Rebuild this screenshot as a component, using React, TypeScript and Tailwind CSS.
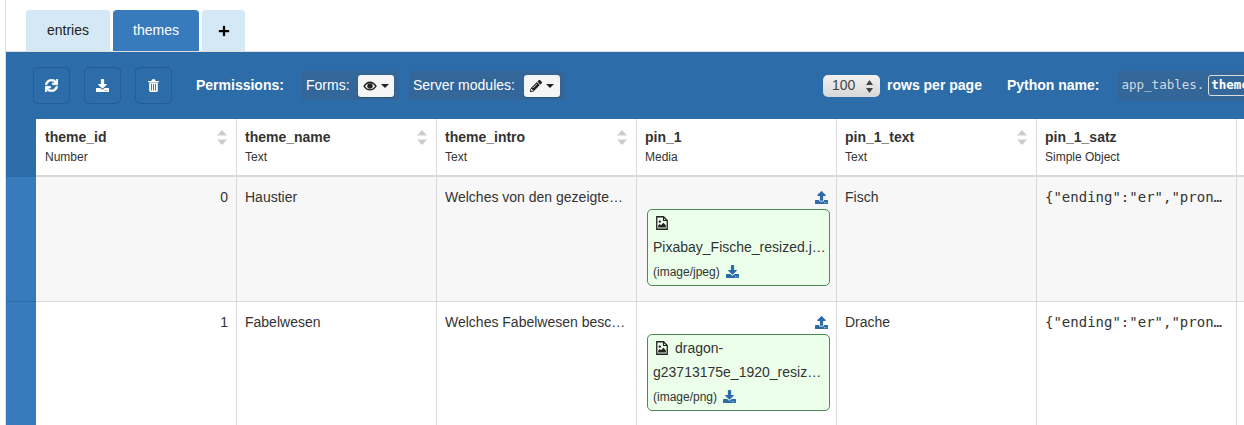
import React from "react";
import { FaSync, FaDownload, FaPencilAlt, FaUpload, FaPlus } from "react-icons/fa";

const sans = "font-['Liberation_Sans',Arial,sans-serif]";
const mono = "font-['DejaVu_Sans_Mono',monospace]";

function Sort() {
  return (
    <svg width="10" height="15" viewBox="0 0 10 15" className="absolute right-[9px] top-[11px]">
      <path d="M5 0 L10 5.5 H0 Z" fill="#ccc" />
      <path d="M5 15 L10 9.5 H0 Z" fill="#ccc" />
    </svg>
  );
}

function FileImage() {
  return (
    <svg width="12" height="14" viewBox="0 0 12 14" className="shrink-0">
      <path d="M0.75 0.75 H7.5 L11.25 4.5 V13.25 H0.75 Z" fill="none" stroke="#222" strokeWidth="1.3" />
      <path d="M7.5 0.75 V4.5 H11.25" fill="none" stroke="#222" strokeWidth="1.1" />
      <circle cx="3.8" cy="5.6" r="1.2" fill="#222" />
      <path d="M2.2 11.5 V9.6 L3.8 8 L5 9.2 L7.4 6.8 L9.8 9.2 V11.5 Z" fill="#222" />
    </svg>
  );
}

function Eye() {
  return (
    <svg width="14" height="10" viewBox="0 0 14 10" className="shrink-0">
      <path d="M0.2 5.2 C2 2 4.4 0.4 7 0.4 C9.6 0.4 12 2 13.8 5.2 C12 8 9.6 9.6 7 9.6 C4.4 9.6 2 8 0.2 5.2 Z" fill="#222" />
      <path d="M2 5.2 C3.4 3.2 5 2.3 7 2.3 C9 2.3 10.6 3.2 12 5.2 C10.6 7 9 8.2 7 8.2 C5 8.2 3.4 7 2 5.2 Z" fill="#f5f5f5" />
      <circle cx="7" cy="5" r="2.7" fill="#222" />
    </svg>
  );
}

function Trash() {
  return (
    <svg width="11" height="13" viewBox="0 0 11 13" className="shrink-0">
      <path d="M0 2 H3.4 L4 0.3 H7 L7.6 2 H11 V3.2 H0 Z" fill="white" />
      <path d="M1.2 3.6 H9.8 V11.6 Q9.8 13 8.6 13 H2.4 Q1.2 13 1.2 11.6 Z M3 4.8 V11.6 H3.9 V4.8 Z M5.05 4.8 V11.6 H5.95 V4.8 Z M7.1 4.8 V11.6 H8 V4.8 Z" fill="white" fillRule="evenodd" />
    </svg>
  );
}

const cols = [
  { name: "theme_id", type: "Number", sort: true, w: "w-[201px] pl-[9px]" },
  { name: "theme_name", type: "Text", sort: true, w: "w-[200px] pl-[8px]" },
  { name: "theme_intro", type: "Text", sort: true, w: "w-[200px] pl-[8px]" },
  { name: "pin_1", type: "Media", sort: false, w: "w-[200px] pl-[8px]" },
  { name: "pin_1_text", type: "Text", sort: true, w: "w-[200px] pl-[8px]" },
  { name: "pin_1_satz", type: "Simple Object", sort: false, w: "w-[200px] pl-[8px]" },
];

function ToolBtn({ children }: { children: React.ReactNode }) {
  return (
    <div className="w-[37px] h-[37px] rounded-[5px] border border-[#255c91] flex items-center justify-center text-white text-[13px]">
      {children}
    </div>
  );
}

function Drop({ children }: { children: React.ReactNode }) {
  return (
    <div className="w-[36px] h-[22px] shrink-0 bg-[#f5f5f5] rounded-[3px] flex items-center justify-center gap-[4px] text-[#222] shadow-[0_1px_1px_rgba(0,0,0,0.2)]">
      {children}
      <span className="w-0 h-0 border-x-[4px] border-x-transparent border-t-[4px] border-t-[#222]" />
    </div>
  );
}

function Media({ first, second, type }: { first?: string; second: string; type: string }) {
  return (
    <div className="h-full">
      <div className="flex justify-end pr-[8px] pt-[14px] h-[32px] text-[#2b6ca8] text-[13px]">
        <FaUpload />
      </div>
      <div className="ml-[10px] h-[77px] w-[183px] rounded-[5px] border border-[#4d8a55] bg-[#ebffeb] pl-[5px] pr-[3px] text-[#333] text-[14px]">
        <div className="flex items-center h-[26px] gap-[7px] pl-[3px]">
          <FileImage />
          {first && <span>{first}</span>}
        </div>
        <div className="h-[23px] leading-[23px] whitespace-nowrap overflow-hidden text-ellipsis">{second}</div>
        <div className="flex items-center h-[25px] gap-[6px] text-[12px]">
          <span>{type}</span>
          <FaDownload className="text-[13px] text-[#2b6ca8]" />
        </div>
      </div>
    </div>
  );
}

function Cell({ children, className = "", w = "w-[200px]" }: { children?: React.ReactNode; className?: string; w?: string }) {
  return (
    <div className={`${w} shrink-0 h-full border-r border-[#d9d9d9] overflow-hidden ${className}`}>{children}</div>
  );
}

function Row({ id, name, intro, media, text, bg }: { id: number; name: string; intro: string; media: React.ReactNode; text: string; bg: string }) {
  const pad = "px-[8px] pt-[10px] leading-[20px]";
  return (
    <div className="flex h-[124px]">
      <div className="w-[30px] shrink-0 bg-[#377bbd]" />
      <div className={`flex ${bg} grow text-[14px] text-[#333]`}>
        <Cell w="w-[201px]" className={`${pad} text-right`}>{id}</Cell>
        <Cell className={pad}>{name}</Cell>
        <Cell className={pad}><div className="whitespace-nowrap overflow-hidden text-ellipsis">{intro}</div></Cell>
        <Cell>{media}</Cell>
        <Cell className={pad}>{text}</Cell>
        <Cell className={pad}>
          <div className={`${mono} text-[14px] whitespace-nowrap overflow-hidden text-ellipsis`}>{'{"ending":"er","pronoun":"der"}'}</div>
        </Cell>
      </div>
    </div>
  );
}

export default function App() {
  return (
    <div className={`${sans} w-[1244px] h-[425px] overflow-hidden bg-white`}>
      <div className="ml-[5px] h-full border-l border-[#ddd]">
        <div className="flex h-[51px] pt-[10px] pl-[20px] gap-[3px] text-[14px]">
          <div className="w-[84px] rounded-t-[4px] bg-[#d4e9f5] text-[#222] flex items-center justify-center pb-[1px]">entries</div>
          <div className="w-[86px] rounded-t-[4px] bg-[#377bbd] text-white flex items-center justify-center pb-[1px]">themes</div>
          <div className="w-[43px] rounded-t-[4px] bg-[#d4e9f5] text-black flex items-center justify-center text-[12px]"><FaPlus /></div>
        </div>
        <div className="h-px bg-[#ddd]" />
        <div className="flex items-center h-[67px] bg-[#2c6ca9] text-white text-[14px] whitespace-nowrap overflow-hidden">
          <div className="flex shrink-0 gap-[14px] ml-[27px]">
            <ToolBtn><FaSync stroke="currentColor" strokeWidth={24} /></ToolBtn>
            <ToolBtn><FaDownload /></ToolBtn>
            <ToolBtn><Trash /></ToolBtn>
          </div>
          <span className="ml-[24px] w-[88px] shrink-0 font-bold">Permissions:</span>
          <div className="ml-[17px] h-[29px] w-[98px] shrink-0 flex items-center rounded-[4px] bg-[#336699] pl-[5px] gap-[8px]">
            <span>Forms:</span>
            <Drop><Eye /></Drop>
          </div>
          <div className="ml-[10px] h-[29px] w-[156px] shrink-0 flex items-center rounded-[4px] bg-[#336699] pl-[4px] gap-[9px]">
            <span>Server modules:</span>
            <Drop><FaPencilAlt className="text-[12px]" /></Drop>
          </div>
          <div className="ml-[258px] w-[57px] h-[22px] shrink-0 rounded-[5px] bg-gradient-to-b from-[#f2f2f2] to-[#d8d8d8] text-[#444] flex items-center pl-[9px] text-[14px] relative">
            100
            <svg width="7" height="13" viewBox="0 0 7 13" className="absolute right-[7px] top-[5px]"><path d="M3.5 0 L7 5 H0 Z" fill="#444" /><path d="M3.5 13 L7 8 H0 Z" fill="#444" /></svg>
          </div>
          <span className="ml-[7px] shrink-0 font-bold">rows per page</span>
          <span className="ml-[25px] shrink-0 font-bold">Python name:</span>
          <div className={`ml-[18px] h-[30px] grow min-w-0 flex items-center rounded-l-[4px] bg-[#336699] pl-[4px] ${mono} text-[12.5px] text-[#d0d8e0]`}>
            <span className="shrink-0">app_tables.</span>
            <span className="ml-[4px] h-[21px] shrink-0 pl-[2px] pr-[20px] flex items-center border border-[#ddd] rounded-[3px] font-bold text-white">themes</span>
          </div>
        </div>
        <div className="flex h-[56px] bg-[#2c6ca9]">
          <div className="w-[30px] shrink-0" />
          <div className="flex grow bg-white">
            {cols.map((c) => (
              <div key={c.name} className={`relative ${c.w} shrink-0 border-r border-[#d9d9d9] pt-[9px]`}>
                <div className="text-[14px] font-bold text-[#333] leading-[18px]">{c.name}</div>
                <div className="text-[12px] text-[#333] leading-[17px] mt-[3px]">{c.type}</div>
                {c.sort && <Sort />}
              </div>
            ))}
          </div>
        </div>
        <div className="flex h-[2px]">
          <div className="w-[30px] bg-[#2c6ca9]" />
          <div className="grow bg-[#d9d9d9]" />
        </div>
        <Row
          id={0}
          name="Haustier"
          intro="Welches von den gezeigten Haustieren"
          text="Fisch"
          bg="bg-[#f7f7f7]"
          media={<Media second="Pixabay_Fische_resized.jpeg" type="(image/jpeg)" />}
        />
        <div className="flex h-px">
          <div className="w-[30px] bg-[#2c6ca9]" />
          <div className="grow bg-[#d9d9d9]" />
        </div>
        <Row
          id={1}
          name="Fabelwesen"
          intro="Welches Fabelwesen beschreibt dieser Satz"
          text="Drache"
          bg="bg-white"
          media={<Media first="dragon-" second="g23713175e_1920_resized.png" type="(image/png)" />}
        />
      </div>
    </div>
  );
}
